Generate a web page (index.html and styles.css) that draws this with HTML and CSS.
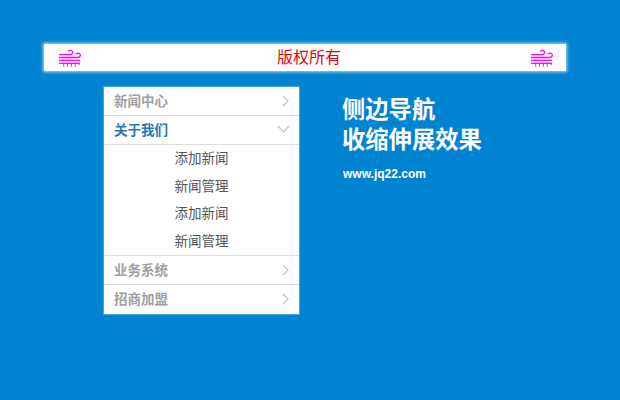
FILE: index.html
```html
<!DOCTYPE html>
<html lang="zh-CN">
<head>
<meta charset="utf-8">
<title>侧边导航</title>
<link rel="stylesheet" href="styles.css">
</head>
<body>
<svg width="0" height="0" class="defs">
  <symbol id="wind" viewBox="0 0 24 20">
    <g fill="none" stroke="#f0f" stroke-width="1.4">
      <path d="M1 6.5H12.5C15 6.5 15.6 4.8 15.2 3.6C14.7 2 12 1.3 10.6 3"/>
      <path d="M1 9.5H20.5C23 9.5 23.6 7.6 23 6.2C22.3 4.6 19.6 4.4 18.6 6"/>
      <path d="M1 12.5H23"/>
      <path d="M1 15.5H23"/>
      <path d="M6 15.5V19M10 15.5V19M14 15.5V19M18 15.5V19M22 15.5V17.5" stroke-width="1"/>
    </g>
  </symbol>
</svg>
<header class="topbar">
  <svg class="wind"><use href="#wind"/></svg>
  <span class="topbar-title">版权所有</span>
  <svg class="wind"><use href="#wind"/></svg>
</header>
<main class="content">
  <nav class="menu">
    <div class="menu-row">
      <span>新闻中心</span>
      <svg class="chev" viewBox="0 0 16 16"><path d="M9 4L14 9L9 14"/></svg>
    </div>
    <div class="menu-row menu-row-open">
      <span>关于我们</span>
      <svg class="chev" viewBox="0 0 16 16"><path d="M4 5L9.5 11L15 5"/></svg>
    </div>
    <ul class="submenu">
      <li>添加新闻</li>
      <li>新闻管理</li>
      <li>添加新闻</li>
      <li>新闻管理</li>
    </ul>
    <div class="menu-row">
      <span>业务系统</span>
      <svg class="chev" viewBox="0 0 16 16"><path d="M9 4L14 9L9 14"/></svg>
    </div>
    <div class="menu-row menu-row-last">
      <span>招商加盟</span>
      <svg class="chev" viewBox="0 0 16 16"><path d="M9 4L14 9L9 14"/></svg>
    </div>
  </nav>
  <section class="intro">
    <h1>侧边导航<br>收缩伸展效果</h1>
    <p>www.jq22.com</p>
  </section>
</main>
</body>
</html>
```
FILE: styles.css
```css
* { box-sizing: border-box; }
html, body { height: 100%; }
body {
  margin: 0;
  padding-top: 44px;
  background: #0083d1;
  font-family: "Liberation Sans", "Noto Sans CJK SC", sans-serif;
  overflow: hidden;
}
.defs { position: absolute; }
.topbar {
  display: flex;
  justify-content: space-between;
  align-items: center;
  margin-left: 44px;
  width: 522px;
  height: 27px;
  padding: 0 13px 0 14px;
  background: #fff;
  box-shadow: 0 0 3px 1px rgba(255, 255, 255, .7);
}
.topbar-title {
  margin-left: 7px;
  color: #e60012;
  font-size: 16px;
  line-height: 27px;
}
.wind { width: 23px; height: 20px; }
.content {
  display: flex;
  align-items: flex-start;
  margin: 16px 0 0 104px;
}
.menu {
  width: 195px;
  background: #fff;
  box-shadow: 0 0 1px 1px rgba(255, 255, 255, .25);
  font-size: 13.5px;
}
.menu-row {
  display: flex;
  justify-content: space-between;
  align-items: center;
  height: 29px;
  padding: 0 9px 2px 10px;
  border-bottom: 1px solid #ddd;
  color: #a0a0a0;
  font-weight: 700;
}
.menu-row-open { color: #2a76b4; }
.menu-row-last { border-bottom: 0; padding-bottom: 4px; }
.chev { width: 16px; height: 16px; flex: none; }
.chev path { fill: none; stroke: #c4c4c4; stroke-width: 1.3; }
.submenu {
  margin: 0;
  padding: 0;
  list-style: none;
  border-bottom: 1px solid #ddd;
}
.submenu li {
  height: 27.5px;
  line-height: 27.5px;
  text-align: center;
  color: #555;
}
.intro { margin-left: 39px; color: #fff; padding-top: 8px; }
.intro h1 {
  margin: 0 0 0 4px;
  font-size: 23.3px;
  line-height: 30px;
  font-weight: 700;
}
.intro p {
  margin: 11px 0 0 5px;
  font-size: 12px;
  font-weight: 700;
  line-height: 16px;
}
```
